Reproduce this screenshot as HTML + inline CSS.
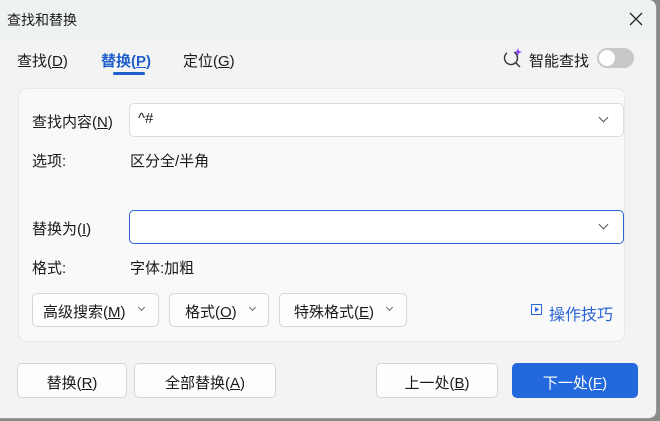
<!DOCTYPE html>
<html><head><meta charset="utf-8"><style>
*{box-sizing:border-box;margin:0;padding:0}
body{width:660px;height:421px;background:#8a8a8a;font-family:"Liberation Sans","Noto Sans CJK SC",sans-serif;font-size:15px;color:#1a1a1a;position:relative;overflow:hidden}
.win{position:absolute;left:0;top:0;width:657px;height:419px;background:#f3f3f3;border-right:1px solid #999;border-bottom:1px solid #999;border-radius:0 8px 8px 0;overflow:hidden}
.title{position:absolute;left:0;top:0;width:100%;height:38px;background:#eef3ef}
.abs{position:absolute;white-space:nowrap}
u{text-decoration:underline}
.panel{position:absolute;left:18px;top:88px;width:607px;height:254px;background:#f9f9f9;border:1px solid #e8e8e8;border-radius:8px}
.inp{position:absolute;background:#fff;border:1px solid #dcdcdc;border-radius:5px}
.btn{position:absolute;background:#fdfdfd;border:1px solid #d6d6d6;border-radius:5px;text-align:center;font-size:15px}
.chev{position:absolute;width:7px;height:7px;border-right:1.3px solid #555;border-bottom:1.3px solid #555;transform:rotate(45deg)}
</style></head><body>
<div class="win">
<div class="title"></div>
<div class="abs" style="left:7px;top:10px;font-size:14px">查找和替换</div>
<svg class="abs" style="left:629px;top:12px" width="14" height="14"><path d="M1 1L13 13M13 1L1 13" stroke="#222" stroke-width="1.3"/></svg>
<div class="abs" style="left:17px;top:50px;font-size:15px">查找(<u>D</u>)</div>
<div class="abs" style="left:101px;top:50px;font-size:15px;color:#1f5fcc;font-weight:bold">替换(<u>P</u>)</div>
<div class="abs" style="left:113px;top:72px;width:32px;height:3px;background:#1f5fcc;border-radius:2px"></div>
<div class="abs" style="left:183px;top:50px;font-size:15px">定位(<u>G</u>)</div>
<svg class="abs" style="left:502px;top:47px" width="22" height="22"><circle cx="9" cy="11" r="6.5" fill="none" stroke="#333" stroke-width="1.4" stroke-dasharray="33 8" transform="rotate(-60 9 11)"/><path d="M14 16L18 20" stroke="#333" stroke-width="1.4"/><path d="M16 1L17 4L20 5L17 6L16 9L15 6L12 5L15 4Z" fill="#8a3cf0"/></svg>
<div class="abs" style="left:529px;top:50px;font-size:15px">智能查找</div>
<div class="abs" style="left:597px;top:48px;width:37px;height:20px;border-radius:10px;background:#c8c8c8"><div style="position:absolute;left:2px;top:2px;width:16px;height:16px;border-radius:50%;background:#fff"></div></div>
<div class="panel"></div>
<div class="abs" style="left:32px;top:111px">查找内容(<u>N</u>)</div>
<div class="inp" style="left:129px;top:103px;width:495px;height:34px"></div>
<div class="abs" style="left:138px;top:110px">^#</div>
<div class="chev" style="left:600px;top:114px"></div>
<div class="abs" style="left:32px;top:150px">选项:</div>
<div class="abs" style="left:130px;top:150px">区分全/半角</div>
<div class="abs" style="left:32px;top:218px">替换为(<u>I</u>)</div>
<div class="inp" style="left:129px;top:210px;width:495px;height:34px;border:1px solid #2a66d6"></div>
<div class="chev" style="left:600px;top:221px"></div>
<div class="abs" style="left:32px;top:257px">格式:</div>
<div class="abs" style="left:130px;top:257px">字体:加粗</div>
<div class="btn" style="left:32px;top:293px;width:127px;height:34px;text-align:left;padding:7px 0 0 10px">高级搜索(<u>M</u>)</div><div class="chev" style="left:139px;top:305px;width:5px;height:5px;border-color:#666"></div>
<div class="btn" style="left:169px;top:293px;width:100px;height:34px;text-align:left;padding:7px 0 0 15px">格式(<u>O</u>)</div><div class="chev" style="left:250px;top:305px;width:5px;height:5px;border-color:#666"></div>
<div class="btn" style="left:279px;top:293px;width:128px;height:34px;text-align:left;padding:7px 0 0 14px">特殊格式(<u>E</u>)</div><div class="chev" style="left:387px;top:305px;width:5px;height:5px;border-color:#666"></div>
<svg class="abs" style="left:531px;top:304px" width="12" height="12"><rect x="0.5" y="0.5" width="10" height="10" fill="none" stroke="#2a66d6"/><path d="M4 3L8 5.5L4 8Z" fill="#2a66d6"/></svg>
<div class="abs" style="left:549px;top:301px;color:#2a66d6;font-size:16px">操作技巧</div>
<div class="btn" style="left:17px;top:363px;width:110px;height:35px;padding-top:8px">替换(<u>R</u>)</div>
<div class="btn" style="left:134px;top:363px;width:142px;height:35px;padding-top:8px">全部替换(<u>A</u>)</div>
<div class="btn" style="left:376px;top:363px;width:122px;height:35px;padding-top:8px">上一处(<u>B</u>)</div>
<div class="btn" style="left:512px;top:363px;width:126px;height:35px;padding-top:8px;background:#2368dc;border-color:#2368dc;color:#fff">下一处(<u>F</u>)</div>
</div>
</body></html>
